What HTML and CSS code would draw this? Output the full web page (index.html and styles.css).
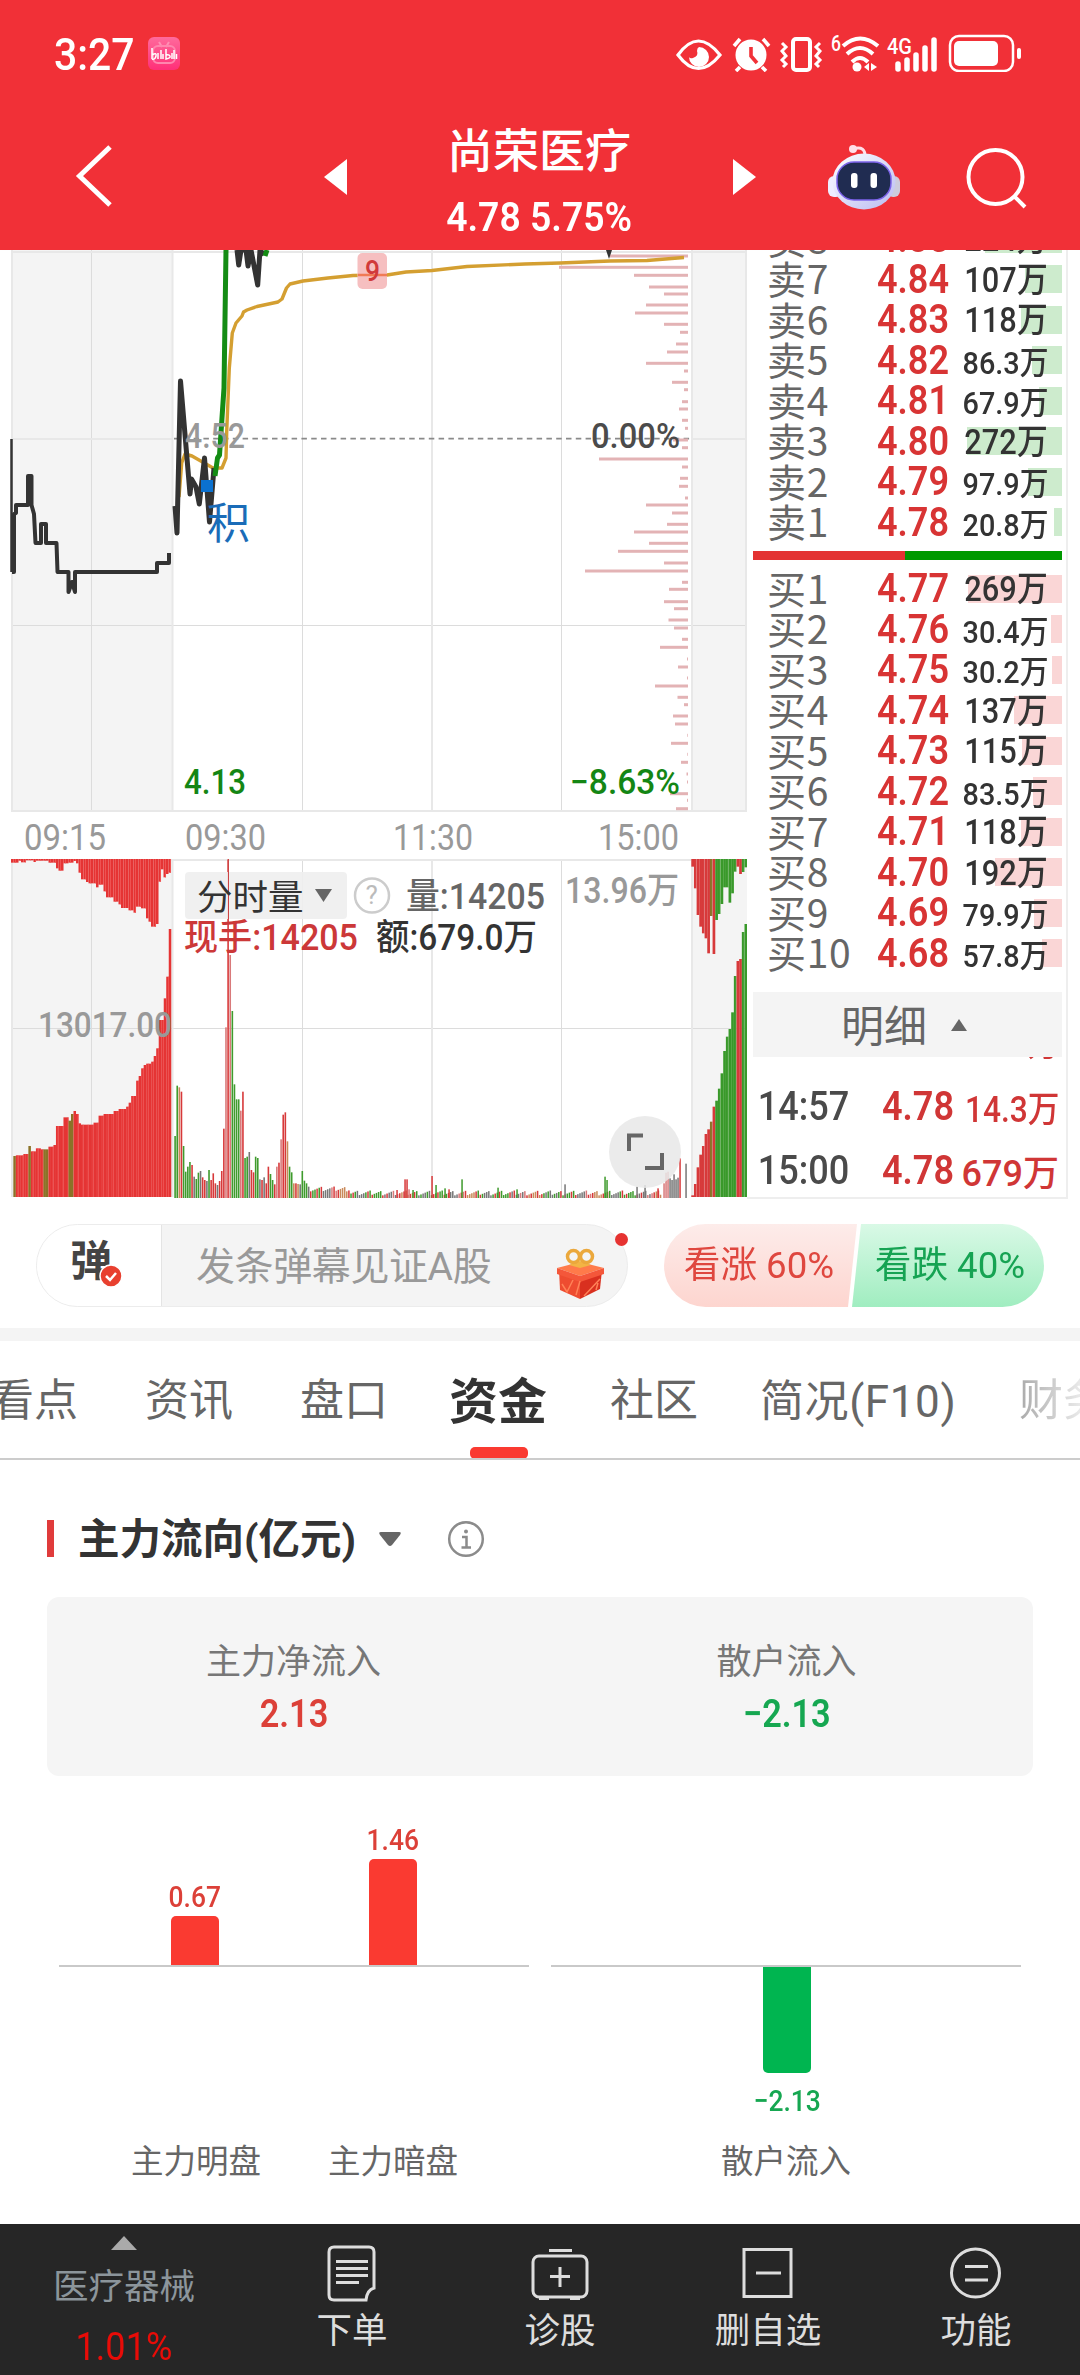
FILE: index.html
```html
<!DOCTYPE html>
<html lang="zh-CN">
<head>
<meta charset="utf-8">
<title>尚荣医疗 4.78 5.75%</title>
<link rel="stylesheet" href="styles.css">
</head>
<body>
<header class="top">
  <div class="status">
    <span class="clock">3:27</span>
    <svg class="bili" width="32" height="33" viewBox="0 0 32 33"><defs><linearGradient id="bg" x2="0" y2="1"><stop offset="0" stop-color="#ff6a9c"/><stop offset="1" stop-color="#ff2f78"/></linearGradient></defs><rect width="32" height="33" rx="6" fill="url(#bg)"/><path d="M11 5l3 5M21 5l-3 5" stroke="#ff8fb4" stroke-width="2"/><rect x="5" y="9" width="22" height="17" rx="5" fill="none" stroke="#ff86ae" stroke-width="2"/><path d="M4 11v11M4 18q5-3 4 1t-4 3M10 16v6M13 13v9M15 17v5M18 12v10q5-1 4-3t-4-1M24 16v6M26 13v9M28.500 17v5" fill="none" stroke="#fff" stroke-width="1.500"/></svg>
    <svg class="sysicons" width="346" height="38" viewBox="676 34 346 38" fill="none" stroke="#fff">
      <path d="M678 55Q698 27 720 55Q698 82 678 55Z" stroke-width="3.200"/>
      <path d="M699 47a10 10 0 1 1-10 10q1 2 4 1q6-2 4-7q0-3 2-4Z" fill="#fff" stroke="none"/>
      <circle cx="751" cy="55" r="15.500" fill="#fff" stroke="none"/>
      <path d="M734 46l6-7M769 46l-6-7M740 67l-4 4M762 67l4 4" stroke-width="3.600"/>
      <path d="M751 47v9l6 7" stroke="#f13138" stroke-width="3.600"/>
      <rect x="793" y="39" width="17" height="31" rx="3" stroke-width="4"/>
      <path d="M782 43l4 4-4 4 4 5-4 4 4 4-3 3M820 43l-4 4 4 4-4 5 4 4-4 4 3 3" stroke-width="3"/>
      <text class="sys" x="831" y="51" textLength="10" lengthAdjust="spacingAndGlyphs">6</text>
      <path d="M843 46q17-15 35 0M847 54q13-12 26 0M852 62q8-8 16 0" stroke-width="4"/>
      <circle cx="857" cy="67" r="4.500" fill="#fff" stroke="none"/>
      <path d="M869 63v8l-5-4ZM871 63v8l6-4Z" fill="#fff" stroke="none"/>
      <text class="sys" x="887" y="54" textLength="25" lengthAdjust="spacingAndGlyphs">4G</text>
      <path d="M898 64v5M907 60v9M916 55v14M925 48v21M934 40v29" stroke-width="5.500" stroke-linecap="round"/>
      <rect x="950" y="36" width="63" height="35" rx="9" stroke-width="2.500"/>
      <rect x="954" y="41" width="44" height="25" rx="5" fill="#fff" stroke="none"/>
      <path d="M1019 50v7" stroke-width="4" stroke-linecap="round"/>
    </svg>
  </div>
  <nav class="nav">
    <svg width="40" height="64" viewBox="75 144 40 64"><path d="M110 147L79.500 176L110 205" fill="none" stroke="#fff" stroke-width="5"/></svg>
    <svg class="prev" width="24" height="36" viewBox="0 0 24 36"><path d="M23 0v36L0 18Z" fill="#fff"/></svg>
    <div class="title"><h1>尚荣医疗</h1><p><span class="num">4.78 5.75%</span></p></div>
    <svg class="next" width="24" height="36" viewBox="0 0 24 36"><path d="M1 0v36L24 18Z" fill="#fff"/></svg>
    <svg class="robot" width="74" height="70" viewBox="827 142 74 70">
      <defs><linearGradient id="rb" x2="1" y2="1"><stop offset="0" stop-color="#fff"/><stop offset="1" stop-color="#b9bbf2"/></linearGradient></defs>
      <path d="M853 149q13-4 12 9" fill="none" stroke="#ffdfe9" stroke-width="3"/><circle cx="853" cy="149" r="4" fill="#ffdfe9"/>
      <rect x="828" y="176" width="14" height="21" rx="6" fill="#eef"/><rect x="887" y="176" width="13" height="21" rx="6" fill="#ccd"/>
      <ellipse cx="864" cy="181.500" rx="31.500" ry="28" fill="url(#rb)"/>
      <rect x="837" y="162" width="54" height="38" rx="17" fill="#202c51" stroke="#7c63ea" stroke-width="1.500"/>
      <rect x="851" y="173" width="6.500" height="15" rx="3" fill="#fff"/><rect x="870.500" y="173" width="6.500" height="15" rx="3" fill="#fff"/>
    </svg>
    <svg class="search" width="62" height="62" viewBox="965 147 62 62" fill="none" stroke="#fff" stroke-width="4"><circle cx="995.500" cy="177" r="27"/><path d="M1014 196l11 11"/></svg>
  </nav>
</header>

<main>
<section class="market">
  <svg class="chart" width="747" height="950" viewBox="0 250 747 950">
    <g fill="#f4f4f4"><rect x="12" y="250" width="161" height="561"/><rect x="692" y="250" width="55" height="561"/><rect x="12" y="859" width="161" height="338"/><rect x="692" y="859" width="55" height="338"/></g>
    <g stroke="#dcdcdc" stroke-width="1"><path d="M91.500 250V811M302.500 250V811M561.500 250V811M91.500 859V1197M302.500 859V1197M561.500 859V1197M12 625.500H747M12 1028.500H747"/></g>
    <g stroke="#e8e8e8" stroke-width="2"><path d="M12 250V811M172.500 250V811M432 250V811M692 250V811M746 250V811M12 859V1197M172.500 859V1197M432 859V1197M692 859V1197M12 252H747M12 439H172M692 439H747M11 811H747M12 860H747"/></g>
    <path d="M174 438.700H692" stroke="#8a8a8a" stroke-width="1.700" stroke-dasharray="5.500 4.300"/>
    <g id="levels" fill="#e3b3b5"></g>
    <g fill="none" stroke-linejoin="round">
      <path d="M179 497L181.700 463L185 454L192 456L213 468L222 468L226 458L226.700 432L229.300 368L232.300 333L236 323L242 316L243.500 312L247 310L257 306.500L278 302L282 299L286.500 288L290 284L303 281L328 278L353 275.500L387 275L406 272L432 270.500L467 266.500L525 264L560 263L610 261L647 260.500L684 257.500" stroke="#d49f31" stroke-width="3.400"/>
      <path d="M11.500 439V572" stroke="#333" stroke-width="2.500"/>
      <path d="M12 572H14V514L16 513V505H28V476H31.500V505L34 514L35.500 543H41V524H46V543H56.500L57.500 572H68.500V592L72 582L75 592V572H157V563H169V553" stroke="#333" stroke-width="4"/>
      <path d="M175 506L177 533L180.500 381L190 494L191.500 479L196 487L199.300 504L204.500 458L209.500 522L214 468M237 250L238.700 265L241 250L246 250L248 266L251 250L257.700 285L260 250L264 255" stroke="#333" stroke-width="5"/>
      <path d="M215 476L217.500 458L219.500 455L224 388L226 250M265 256L267 250" stroke="#148c14" stroke-width="5"/>
      <path d="M606 250H612L609 259Z" fill="#333"/>
    </g>
    <rect x="201" y="480" width="12" height="12" fill="#0b71cf"/>
    <rect x="357.500" y="253" width="29.500" height="36" rx="5" fill="#f6bfc0"/>
    <path d="M358 275H387" stroke="#f07a55" stroke-width="2.500"/>
    <text class="s30" x="365" y="281" textLength="15" fill="#d13a3a" lengthAdjust="spacingAndGlyphs">9</text>
    <g fill="#999">
      <text class="s35" x="185" y="448" textLength="60" lengthAdjust="spacingAndGlyphs">4.52</text>
      <text class="s36 r" x="24" y="850" textLength="82" lengthAdjust="spacingAndGlyphs">09:15</text>
      <text class="s36 r" x="185" y="850" textLength="81" lengthAdjust="spacingAndGlyphs">09:30</text>
      <text class="s36 r" x="393" y="850" textLength="80" lengthAdjust="spacingAndGlyphs">11:30</text>
      <text class="s36 r" x="598" y="850" textLength="81" lengthAdjust="spacingAndGlyphs">15:00</text>
    </g>
    <text class="s35" x="591" y="448" textLength="89" fill="#4b4b4b" lengthAdjust="spacingAndGlyphs">0.00%</text>
    <text class="cjk" x="207" y="539" font-size="43" fill="#1a6cb8">积</text>
    <text class="s35" x="184" y="794" textLength="62" fill="#148614" lengthAdjust="spacingAndGlyphs">4.13</text>
    <text class="s35" x="570" y="794" textLength="110" fill="#148614" lengthAdjust="spacingAndGlyphs">−8.63%</text>
    <g id="volume"></g>
    <rect x="185" y="872" width="162" height="47" rx="4" fill="#eee" fill-opacity=".9"/>
    <path d="M228.500 859V919" stroke="#c44" stroke-width="1"/>
    <text class="cjk" x="197" y="909.500" font-size="35.500" fill="#333">分时量</text>
    <path d="M315 889H332L323.500 902Z" fill="#666"/>
    <circle cx="372" cy="895.500" r="17" fill="none" stroke="#ccc" stroke-width="2.500"/>
    <text class="s26 r" x="365.500" y="904" fill="#bbb">?</text>
    <text class="s36" x="406" y="908.500" textLength="139" fill="#666" lengthAdjust="spacingAndGlyphs">量:14205</text>
    <text class="s36" x="565" y="902.500" textLength="114" fill="#999" lengthAdjust="spacingAndGlyphs">13.96万</text>
    <text class="s36" x="184" y="949.500" textLength="174" fill="#cc3838" lengthAdjust="spacingAndGlyphs">现手:14205</text>
    <text class="s36" x="376" y="949.500" textLength="161" fill="#333" lengthAdjust="spacingAndGlyphs">额:679.0万</text>
    <text class="s35" x="38" y="1036.500" textLength="134" fill="#999" lengthAdjust="spacingAndGlyphs">13017.00</text>
    <circle cx="645" cy="1152" r="36" fill="#e8e8e8" fill-opacity=".85"/>
    <path d="M644 1135.500H630V1151M663 1153V1168H646" transform="translate(-1)" fill="none" stroke="#666" stroke-width="4"/>
  </svg>

  <aside class="book">
    <ul class="quotes sells">
      <li><b>卖8</b><i class="num">4.85</i><em><span class="num">224万</span></em><s style="width:77px"></s></li>
      <li><b>卖7</b><i class="num">4.84</i><em><span class="num">107万</span></em><s style="width:37px"></s></li>
      <li><b>卖6</b><i class="num">4.83</i><em><span class="num">118万</span></em><s style="width:41px"></s></li>
      <li><b>卖5</b><i class="num">4.82</i><em class="d"><span class="num">86.3万</span></em><s style="width:30px"></s></li>
      <li><b>卖4</b><i class="num">4.81</i><em class="d"><span class="num">67.9万</span></em><s style="width:23px"></s></li>
      <li><b>卖3</b><i class="num">4.80</i><em><span class="num">272万</span></em><s style="width:95px"></s></li>
      <li><b>卖2</b><i class="num">4.79</i><em class="d"><span class="num">97.9万</span></em><s style="width:34px"></s></li>
      <li><b>卖1</b><i class="num">4.78</i><em class="d"><span class="num">20.8万</span></em><s style="width:8px"></s></li>
    </ul>
    <div class="ratio"><span style="width:152px"></span></div>
    <ul class="quotes buys">
      <li><b>买1</b><i class="num">4.77</i><em><span class="num">269万</span></em><s style="width:94px"></s></li>
      <li><b>买2</b><i class="num">4.76</i><em class="d"><span class="num">30.4万</span></em><s style="width:11px"></s></li>
      <li><b>买3</b><i class="num">4.75</i><em class="d"><span class="num">30.2万</span></em><s style="width:10px"></s></li>
      <li><b>买4</b><i class="num">4.74</i><em><span class="num">137万</span></em><s style="width:48px"></s></li>
      <li><b>买5</b><i class="num">4.73</i><em><span class="num">115万</span></em><s style="width:40px"></s></li>
      <li><b>买6</b><i class="num">4.72</i><em class="d"><span class="num">83.5万</span></em><s style="width:29px"></s></li>
      <li><b>买7</b><i class="num">4.71</i><em><span class="num">118万</span></em><s style="width:41px"></s></li>
      <li><b>买8</b><i class="num">4.70</i><em><span class="num">192万</span></em><s style="width:67px"></s></li>
      <li><b>买9</b><i class="num">4.69</i><em class="d"><span class="num">79.9万</span></em><s style="width:28px"></s></li>
      <li><b>买10</b><i class="num">4.68</i><em class="d"><span class="num">57.8万</span></em><s style="width:20px"></s></li>
    </ul>
    <div class="detail">明细<svg width="16" height="12" viewBox="0 0 16 12"><path d="M0 12L8 0l8 12Z" fill="#666"/></svg></div>
    <ul class="ticks">
      <li><b class="num">14:57</b><i class="num">4.78</i><em><span class="num">102万</span></em></li>
      <li><b class="num">14:57</b><i class="num">4.78</i><em><span class="num">14.3万</span></em></li>
      <li><b class="num">15:00</b><i class="num">4.78</i><em class="w"><span class="num">679万</span></em></li>
    </ul>
  </aside>
</section>

<section class="social">
  <div class="barrage">
    <div class="dan">弹<svg width="24" height="24" viewBox="0 0 24 24"><circle cx="12" cy="12" r="11" fill="#e8402f" stroke="#fff" stroke-width="1.500"/><path d="M7 12l4 4 6-7" fill="none" stroke="#fff" stroke-width="2.500"/></svg></div>
    <div class="field">发条弹幕见证A股</div>
    <svg class="gift" width="50" height="52" viewBox="555 1248 50 52"><path d="M557 1268l23-6 24 6-24 8Z" fill="#ff7b4a"/><path d="M559 1270l21 7v22l-20-9Z" fill="#ee4c30"/><path d="M602 1270l-22 7v22l20-10Z" fill="#d9301f"/><path d="M557 1268l23 8 24-8v6l-24 8-23-8Z" fill="#f4573a"/><path d="M562 1284l5 8 6-12M576 1295l4-14M600 1279l-16 17M596 1290l2-7" fill="none" stroke="#ff8157" stroke-width="1.500"/><path d="M569 1265l11-4 11 4-11 3Z" fill="#f3b444"/><g fill="none" stroke="#eba83c" stroke-width="3.500"><ellipse cx="573.500" cy="1256.500" rx="6" ry="6"/><ellipse cx="586.500" cy="1256.500" rx="6" ry="6"/></g></svg>
    <span class="dot"></span>
  </div>
  <div class="vote"><div class="up"><span class="num">看涨 60%</span></div><div class="down"><span class="num">看跌 40%</span></div></div>
</section>

<nav class="tabs"><a class="t1">看点</a><a>资讯</a><a>盘口</a><a class="on">资金</a><a>社区</a><a class="f10">简况(F10)</a><a class="last">财务</a></nav>

<section class="flow">
  <div class="head"><span class="mark"></span><h2>主力流向(亿元)</h2>
    <svg class="caret" width="22" height="14" viewBox="0 0 22 14"><path d="M2 0h18q3 0 1 3l-8 10q-2 2-4 0L1 3Q-1 0 2 0Z" fill="#666"/></svg>
    <svg width="38" height="38" viewBox="0 0 38 38" fill="none" stroke="#8b8b8b" stroke-width="2.500"><circle cx="19" cy="19" r="16.800"/><path d="M15 17h4.500v10M14.500 27.500h9.500"/><circle cx="19" cy="11.500" r="2" fill="#8b8b8b" stroke="none"/></svg>
  </div>
  <div class="card">
    <div><p>主力净流入</p><strong class="num red">2.13</strong></div>
    <div><p>散户流入</p><strong class="num green">−2.13</strong></div>
  </div>
  <div class="bars">
    <div class="half"><div class="above">
      <div class="col"><span class="num red">0.67</span><u style="height:49px"></u></div>
      <div class="col"><span class="num red">1.46</span><u style="height:106px"></u></div></div>
      <div class="below"></div>
      <div class="names"><span>主力明盘</span><span>主力暗盘</span></div>
    </div>
    <div class="half one"><div class="above"></div>
      <div class="below"><div class="col"><u style="height:106px"></u><span class="num green">−2.13</span></div></div>
      <div class="names"><span>散户流入</span></div>
    </div>
  </div>
</section>
</main>

<footer class="dock">
  <div class="sector"><svg width="26" height="14" viewBox="0 0 26 14"><path d="M0 14L13 0l13 14Z" fill="#aaa"/></svg><span>医疗器械</span><b class="num">1.01%</b></div>
  <div class="act"><svg width="58" height="58" viewBox="-1 0 58 58"><path d="M10 3h35q5 0 5 5v36q-7 2-8 12H10q-5 0-5-5V8q0-5 5-5Z"/><path d="M12 17.500h32M12 24.500h32M12 31.500h32M12 38.500h23"/></svg>下单</div>
  <div class="act"><svg width="58" height="58" viewBox="0 0 58 58"><rect x="2" y="12" width="54" height="41" rx="6"/><path d="M18 6.500h23M29 23v20M19 32.500h20M8 54.500h10M39 54.500h10"/></svg>诊股</div>
  <div class="act"><svg width="58" height="58" viewBox="0 0 58 58"><rect x="5" y="5.500" width="47" height="47"/><path d="M17 29h25"/></svg>删自选</div>
  <div class="act"><svg width="58" height="58" viewBox="0 0 58 58"><circle cx="28.500" cy="29" r="24"/><path d="M18 22.500h23M18 36h23"/></svg>功能</div>
</footer>
<script src="chart.js"></script>
</body>
</html>
```
FILE: styles.css
```css
*{box-sizing:border-box;margin:0;padding:0}
body{width:1080px;height:2375px;overflow:hidden;background:#fff;color:#333;font-family:Roboto,"Noto Sans CJK SC",sans-serif}
ul{list-style:none}
i,em{font-style:normal}
s,u,a{text-decoration:none}
svg{display:block;flex:none}
.num{display:inline-block;transform:scaleX(.88);transform-origin:50% 50%;white-space:nowrap;font-weight:500}
.red{color:#dc4038}
.green{color:#16a751}

.top{height:250px;background:#f13037;color:#fff}
.status{display:flex;align-items:flex-start;height:108px;padding:0 58px 0 54px}
.clock{font-size:44px;line-height:52px;font-weight:500;width:94px;margin-top:29px;transform:scaleX(.93);transform-origin:0 0}
.bili{margin-top:37px}
.sysicons{margin:34px 0 0 auto}
.sys{fill:#fff;stroke:none;font-size:22px;font-weight:500}
.nav{display:flex;align-items:flex-start;padding-left:75px}
.nav>svg{margin-top:36px}
.nav .prev{margin:51px 0 0 209px}
.title{width:386px;text-align:center;margin-top:12px;padding-right:4px}
.title h1{font-size:46px;line-height:62px;font-weight:500}
.title p{font-size:41px;line-height:50px;margin-top:10px}
.title .num{transform:scaleX(.91);font-weight:600}
.nav .next{margin:51px 0 0 -2px}
.nav .robot{margin:34px 0 0 71px}
.nav .search{margin:39px 0 0 64px}

.market{display:flex;height:950px}
.chart text{font-family:Roboto,"Noto Sans CJK SC",sans-serif;font-weight:500}
.chart .r{font-weight:400}
.chart .cjk{font-weight:400}
.s26{font-size:26px}.s30{font-size:30px}.s35{font-size:35px}.s36{font-size:36px}
.book{width:321px;height:949px;overflow:hidden;border-right:2px solid #eee;border-bottom:2px solid #eee;padding:0 4px 0 6px}
.quotes b,.quotes i,.ticks b,.ticks i{flex:none}
.quotes em,.ticks em{flex:1;min-width:0;display:flex;justify-content:flex-end}
.quotes em .num,.ticks em .num{flex:none;transform-origin:100% 50%}
.quotes li{display:flex;align-items:center;height:40.500px;position:relative;line-height:40px}
.sells{margin-top:-31.800px}
.quotes b{font:400 39px/38px "Noto Sans CJK SC";color:#666;width:112px;padding:0 0 3px 14px;white-space:nowrap;letter-spacing:.700px}
.quotes i{width:90px;font-size:41px;color:#d83434;text-align:center;margin-left:3px;font-weight:600}
.quotes em{font-size:35px;color:#333;padding:4px 14px 0 0;z-index:1}
.quotes em.d{font-size:32px;padding-top:6px}
.quotes em.d .num{transform:scaleX(.9)}
.quotes s{position:absolute;right:0;top:6.500px;height:28px;background:#cdebcd}
.buys s{background:#fad6d6}
.ratio{height:9px;margin:9px 0 8px;background:#009900;display:flex}
.ratio span{background:#e33333}
.detail{margin-top:19px;height:65px;background:#f4f4f4;display:flex;align-items:center;padding:0 0 3px 88px;font-size:43px;color:#666}
.detail svg{margin:3px 0 0 24px}
.ticks{height:140px;overflow:hidden}
.ticks li{display:flex;align-items:center;height:63.500px;color:#d03636}
.ticks li:first-child{margin-top:-49px;padding-bottom:3px;height:66.500px}
.ticks b{width:105px;font-size:41px;color:#4a4a4a;text-align:center;margin-left:-2px}
.ticks i{width:90px;font-size:41px;text-align:center;margin-left:17px;font-weight:600}
.ticks em{font-size:36px;padding-right:3px}
.ticks em.w .num{transform:scaleX(1)}

.social{display:flex;height:141px;padding:24px 36px 0;border-bottom:13px solid #f4f4f4}
.barrage{position:relative;display:flex;width:592px;height:83px;border:1px solid #ececec;border-radius:42px;background:#f4f4f4}
.dan{position:relative;width:125px;border-radius:42px 0 0 42px;background:#fff;border-right:1px solid #e4e4e4;padding-left:33px;font-size:42px;line-height:74px;font-weight:700;color:#444}
.dan svg{position:absolute;left:62px;top:39px}
.field{width:393px;padding-left:34px;font-size:39px;line-height:84px;color:#999;letter-spacing:-.400px}
.gift{margin-top:23px}
.dot{position:absolute;right:-1px;top:8px;width:13px;height:13px;border-radius:50%;background:#e63331}
.vote{display:flex;margin-left:36px;width:380px;height:83px;font-size:37px;line-height:84px;text-align:center}
.vote .num{font-weight:400;transform:scaleX(.99)}
.up{width:193px;padding-right:3px;border-radius:42px 0 0 42px;background:linear-gradient(#fdecea,#fdd5cf);color:#df473f;clip-path:polygon(0 0,100% 0,184px 100%,0 100%)}
.down{width:192px;margin-left:-5px;padding-left:3px;border-radius:0 42px 42px 0;background:linear-gradient(#d9f9e6,#a0edc0);color:#16a353;clip-path:polygon(9px 0,100% 0,100% 100%,0 100%)}

.tabs{display:flex;align-items:center;height:119px;border-bottom:2px solid #ccc;font-size:44px;color:#666;overflow:hidden;padding-bottom:5px}
.tabs a{width:88px;margin-right:67px;white-space:nowrap;flex:none}
.tabs .t1{margin-left:-10px;margin-right:67px}
.tabs .on{position:relative;width:98px;font-size:49px;font-weight:700;color:#333;margin:0 63px 0 -6px}
.tabs .on::after{content:"";position:absolute;left:21px;bottom:-26px;width:58px;height:12px;border-radius:5px;background:#fa3a31}
.tabs .f10{width:196px;margin:0 63px -2px -5px;letter-spacing:.600px}
.tabs .last{background:linear-gradient(90deg,#aaa,#eee 75%);background-clip:text;-webkit-background-clip:text;color:transparent}

.head{display:flex;align-items:center;height:137px;padding:20px 0 0 47px}
.mark{width:7px;height:37px;background:#e03b3b}
.head h2{font-size:41.500px;line-height:50px;width:277px;margin:2px 0 0 24px;white-space:nowrap;font-weight:700}
.caret{margin:0 46px 0 24px}
.card{display:flex;margin:0 47px;height:179px;border-radius:12px;background:#f5f5f5}
.card div{width:493px;text-align:center;padding-top:43px}
.card p{font-size:35px;line-height:46px;color:#777}
.card strong{font-size:39px;line-height:46px;margin-top:5px;font-weight:600}
.bars{display:flex;padding-left:59px;gap:22px}
.half{width:470px}
.above{display:flex;gap:116px;height:191px;padding-left:95px;align-items:flex-end;border-bottom:2px solid #c9c9c9}
.col{width:82px;display:flex;flex-direction:column;align-items:center;font-size:30px;line-height:34px}
.col u{width:48px;background:#fa3a31;border-radius:5px 5px 0 0;margin-top:2px}
.below{height:165px}
.below .col{margin-left:195px}
.below .col u{background:#00b550;border-radius:0 0 5px 5px;margin:0 0 11px}
.names{display:flex;gap:67px;padding-left:72px;font-size:32.500px;line-height:61px;color:#666}
.one .names{padding-left:170px}

.dock{position:absolute;left:0;top:2224px;width:1080px;height:151px;background:#262626;display:grid;grid-template-columns:248px repeat(4,208px)}
.dock div{display:flex;flex-direction:column;align-items:center}
.sector{padding-top:12px}
.sector span{font-size:35.500px;line-height:44px;color:#8c959b;margin-top:15px}
.dock .sector b{font-size:38px;line-height:44px;color:#e80c08;font-weight:400;margin-top:16px;transform:scaleX(.95)}
.act{padding-top:20px;font-size:35.500px;line-height:44px;color:#ddd}
.act svg{fill:none;stroke:#ddd;stroke-width:3;margin-bottom:7px}
```
FILE: chart.js
```js
(function () {
  var NS = 'http://www.w3.org/2000/svg';
  var colors = {r: '#d7393a', p: '#d9797a', g: '#3f9b2d', o: '#c98a5a', k: '#777', d: '#8b7328', e: '#e53434', f: '#f35a5a', v: '#39992a'};

  function bar(parent, x, y, w, h, fill) {
    var r = document.createElementNS(NS, 'rect');
    r.setAttribute('x', x); r.setAttribute('y', y);
    r.setAttribute('width', w); r.setAttribute('height', h);
    r.setAttribute('fill', fill);
    parent.appendChild(r);
  }

  /* Price distribution: y, left edge */
  var levels = [[256,610],[267.300,559],[275.300,634],[287,649],[294,664],[305,646],[313,635],[324.300,664],[332.300,680],[344,676],[352,667],[363.300,646],[371,684],[382.300,672],[389.700,684],[401.700,682],[409,679],[420.300,682],[428.300,685],[440,673],[447.700,682],[459,599],[467,682],[478.300,680],[486.300,679],[498,685],[505,646],[513,672],[524.300,667],[532,634],[543.300,649],[551.300,618],[563,664],[571,585],[582.300,682],[589.300,669],[601.700,664],[608.700,674],[620,668.500],[628,674],[639.300,682],[647.300,660],[659,687],[667,678],[678,687],[686,655],[697.300,677.500],[704.700,684],[716,673],[724,675],[735.300,687.300],[743.300,671],[754.300,687.300],[762.300,681],[774,686.500],[782,687],[793.700,670],[800.300,687],[808.700,676]];
  var lv = document.getElementById('levels');
  levels.forEach(function (l) { bar(lv, l[1], l[0] - 1.500, 688 - l[1], 3, '#e3b3b5'); });

  var vol = document.getElementById('volume');
  var base = 1197;

  /* Call auction, matched volume below and unmatched above: x, height in thirds */
  var low = [[40,918],[48,916],[70,912],[82,888],[90,904],[105,895],[120,898],[142,890],[155,885],[168,828],[190,802],[200,812],[207,792],[219,783],[228,792],[232,820],[240,824],[278,818],[293,797],[305,792],[340,783],[352,777],[375,770],[380,758],[388,748],[393,738],[405,692],[413,678],[421,655],[430,645],[437,641],[452,635],[455,618],[463,595],[473,570],[477,510],[490,445],[497,380],[505,237]];
  var high = [[33,38],[50,32],[64,37],[75,31],[95,36],[105,32],[140,38],[167,55],[176,62],[187,40],[205,38],[218,33],[224,40],[232,68],[240,88],[257,96],[265,100],[285,112],[293,104],[305,124],[317,142],[335,155],[350,163],[362,174],[380,181],[400,188],[405,170],[424,175],[432,205],[442,215],[453,230],[467,222],[471,95],[478,58],[485,82],[494,72],[506,68]];
  function at(list, x) {
    var v = list[0][1];
    list.forEach(function (p) { if (p[0] <= x + 1) v = p[1]; });
    return v;
  }
  for (var i = 0; i < 63; i++) {
    var z = 40 + i * 7.520, x = z / 3, t = 850 + at(low, z) / 3;
    var c = (i === 0 || i === 6 || i === 12 || i === 13 || i === 22 || i === 23) ? colors.d : colors.e;
    bar(vol, x, t, 2.520, base - t, c);
    if (i % 2 && c === colors.e) bar(vol, x + 1.700, t, .800, base - t, colors.f);
  }
  for (i = 0; i < 64; i++) {
    z = 33 + i * 7.500; x = z / 3;
    t = at(high, z) / 3 - 9;
    bar(vol, x, 859, 2.520, t, colors.e);
    if (i % 2) bar(vol, x + 1.700, 859, .800, t, colors.f);
  }

  /* Closing auction */
  var close = [['r',50,1036],['r',115,1002],['r',195,952],['r',230,914],['r',250,888],['r',265,852],['r',310,838],['d',198,815],['r',312,770],['v',210,752],['v',192,716],['v',162,670],['v',112,603],['v',112,560],['v',158,537],['v',130,487],['v',65,378],['r',50,333],['r',72,327],['v',66,246],['v',52,222]];
  close.forEach(function (b, n) {
    x = 691.300 + n * 2.660;
    bar(vol, x, 859, 2.700, b[1] / 3 - 9, colors[b[0]]);
    bar(vol, x, 850 + b[2] / 3, 2.700, 347 - b[2] / 3, colors[b[0]]);
    if (n % 3 === 1) {
      bar(vol, x + 2, 859, .700, b[1] / 3 - 9, '#fff6');
      bar(vol, x + 2, 850 + b[2] / 3, .700, 347 - b[2] / 3, '#fff6');
    }
  });

  /* Minute volume; each token is a colour key and the bar top in thirds */
  var minutes = 'g858 g707 o712 r725 g888 g965 g950 g936 r945 k980 g987 g968 k963 r982 r990 k993 g960 r990 r970 r1000 k1005 r993 r963 r836 p532 r28 p315 g483 g703 g748 g748 p782 r725 g924 g920 k906 r960 r967 g920 g924 k988 r990 k982 r1000 r950 g972 g990 r1003 p950 r938 p868 r794 r787 o874 g950 g967 o1000 r1000 o1002 k1003 g963 g992 g1000 k1010'.split(' ');
  minutes.forEach(function (m, n) {
    t = 850 + m.slice(1) / 3;
    bar(vol, 174.300 + n * 2.120, t, 1.600, base + 1 - t, colors[m[0]]);
  });
  var peaks = {405:['r',988],407:['r',988],409:['p',1018],413:['g',1020],397:['r',1020],432:['r',978],436:['g',1005],445:['g',1015],449:['r',1018],462:['g',988],498:['g',1013],517:['g',1018],565:['k',1003],605:['g',980],607:['g',990],637:['k',1010],645:['k',1005],658:['r',1015],664:['p',1000],666:['p',968],668:['p',965],670:['k',985],672:['k',990],674:['k',973],676:['k',988],678:['k',983],680:['r',925],686:['k',941]};
  var keys = Object.keys(peaks);
  var cyc = 'rkgorkrggkropkg';
  for (x = 310, i = 0; x < 660; x += 2.120, i++) {
    var lift = x < 350 ? 12 : 0;
    t = 850 + (1036 - lift - (i * 37 % 17) * .900) / 3;
    bar(vol, x, t, 1.500, base + 1 - t, colors[cyc[(i * 7 + (i >> 2)) % 15]]);
  }
  keys.forEach(function (k) {
    t = 850 + peaks[k][1] / 3;
    bar(vol, +k - .700, t, 1.500, base + 1 - t, colors[peaks[k][0]]);
  });
})();
```
